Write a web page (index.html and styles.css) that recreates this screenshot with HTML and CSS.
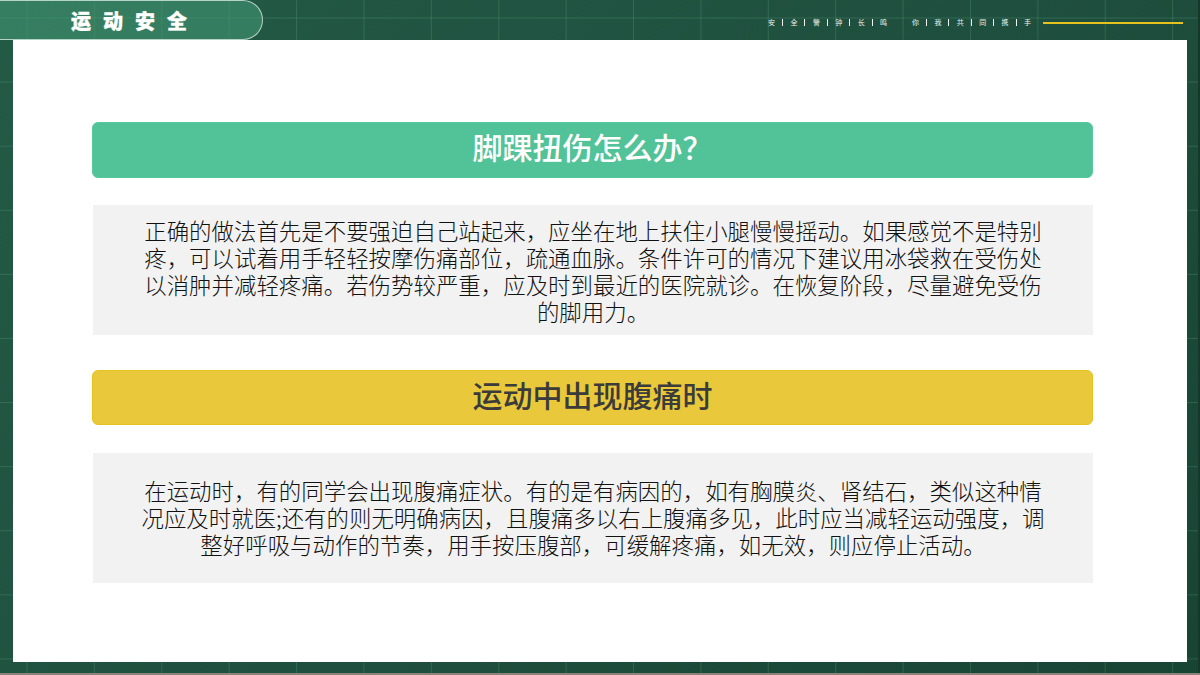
FILE: index.html
```html
<!DOCTYPE html>
<html lang="zh">
<head>
<meta charset="utf-8">
<title>运动安全</title>
<link rel="stylesheet" href="styles.css">
</head>
<body>
<div class="slide">
  <header class="top">
    <div class="tab"><span class="tab-title">运动安全</span></div>
    <div class="slogan">
      <div class="words"><span>安</span><span>全</span><span>警</span><span>钟</span><span>长</span><span>鸣</span></div>
      <div class="words"><span>你</span><span>我</span><span>共</span><span>同</span><span>携</span><span>手</span></div>
      <div class="rule"></div>
    </div>
  </header>
  <main class="panel">
    <h2 class="bar bar-green">脚踝扭伤怎么办？</h2>
    <p class="body-box box-one">正确的做法首先是不要强迫自己站起来，应坐在地上扶住小腿慢慢摇动。如果感觉不是特别疼，可以试着用手轻轻按摩伤痛部位，疏通血脉。条件许可的情况下建议用冰袋救在受伤处以消肿并减轻疼痛。若伤势较严重，应及时到最近的医院就诊。在恢复阶段，尽量避免受伤的脚用力。</p>
    <h2 class="bar bar-yellow">运动中出现腹痛时</h2>
    <p class="body-box box-two">在运动时，有的同学会出现腹痛症状。有的是有病因的，如有胸膜炎、肾结石，类似这种情况应及时就医;还有的则无明确病因，且腹痛多以右上腹痛多见，此时应当减轻运动强度，调整好呼吸与动作的节奏，用手按压腹部，可缓解疼痛，如无效，则应停止活动。</p>
  </main>
</div>
</body>
</html>
```
FILE: styles.css
```css
* { box-sizing: border-box; }
html, body { margin: 0; padding: 0; }
body {
  width: 1200px;
  height: 675px;
  overflow: hidden;
  background: linear-gradient(#8a8578, #8a8578) left bottom / 100% 2px no-repeat, #16382a;
}
.slide {
  width: 1198px;
  height: 673px;
  display: flex;
  flex-direction: column;
  background-color: #1c4a38;
  background-image:
    linear-gradient(to right, rgba(110,190,150,.22) 1px, transparent 1px),
    linear-gradient(to bottom, rgba(110,190,150,.22) 1px, transparent 1px),
    linear-gradient(135deg, #235a46 0%, #1f4f3e 55%, #184434 100%);
  background-size: 67.4px 64.1px, 67.4px 64.1px, 100% 100%;
  background-position: 26.5px 17.5px, 26.5px 17.5px, 0 0;
}
.top { height: 40px; display: flex; justify-content: space-between; flex: none; }
.tab {
  width: 263px;
  height: 40px;
  display: flex;
  align-items: center;
  padding-left: 71px;
  background: rgba(66,150,115,.6);
  border: 1px solid rgba(225,240,232,.75);
  border-left: 0;
  border-radius: 0 20px 20px 0;
}
.tab-title {
  font-family: "Noto Sans CJK SC", sans-serif;
  font-weight: 900;
  font-size: 20px;
  letter-spacing: 12px;
  color: #fff;
  -webkit-text-stroke: 0.4px #fff;
}
.slogan { display: flex; align-items: center; padding: 5px 15px 0 0; }
.words { display: flex; margin-right: 25px; }
.words + .words { margin-right: 12px; }
.words span {
  width: 15px;
  margin-right: 7.4px;
  padding-right: 7px;
  font-family: "Noto Sans CJK SC", sans-serif;
  font-size: 7px;
  line-height: 7px;
  color: #eef4f0;
  border-right: 1px solid #f2f6f3;
}
.words span:last-child { width: 7px; margin-right: 0; padding-right: 0; border-right: 0; }
.rule { width: 140px; height: 2px; background: #e6c21f; }
.panel {
  flex: 1;
  margin: 0 11px 11px 13px;
  padding: 82px 94px 0 79px;
  background: #fff;
}
.bar {
  margin: 0;
  height: 56px;
  border-radius: 6px;
  font-family: "Noto Sans CJK SC", sans-serif;
  font-size: 30px;
  font-weight: 500;
  line-height: 47px;
  text-align: center;
}
.bar-green { background: #52c298; border: 1px solid #56c99e; color: #fff; }
.bar-yellow { height: 55px; background: #e9c93b; border: 1px solid #e6c21f; color: #3b3b3b; }
.body-box {
  margin: 27px 0 35px 1px;
  padding: 12px 45px 0;
  background: #f2f2f2;
  font-family: "Noto Sans CJK SC", sans-serif;
  font-size: 22.45px;
  font-weight: 300;
  line-height: 27px;
  text-align: center;
  color: #111;
}
.box-one { height: 130px; }
.box-two { height: 130px; margin-top: 28px; padding-top: 24px; }
```
